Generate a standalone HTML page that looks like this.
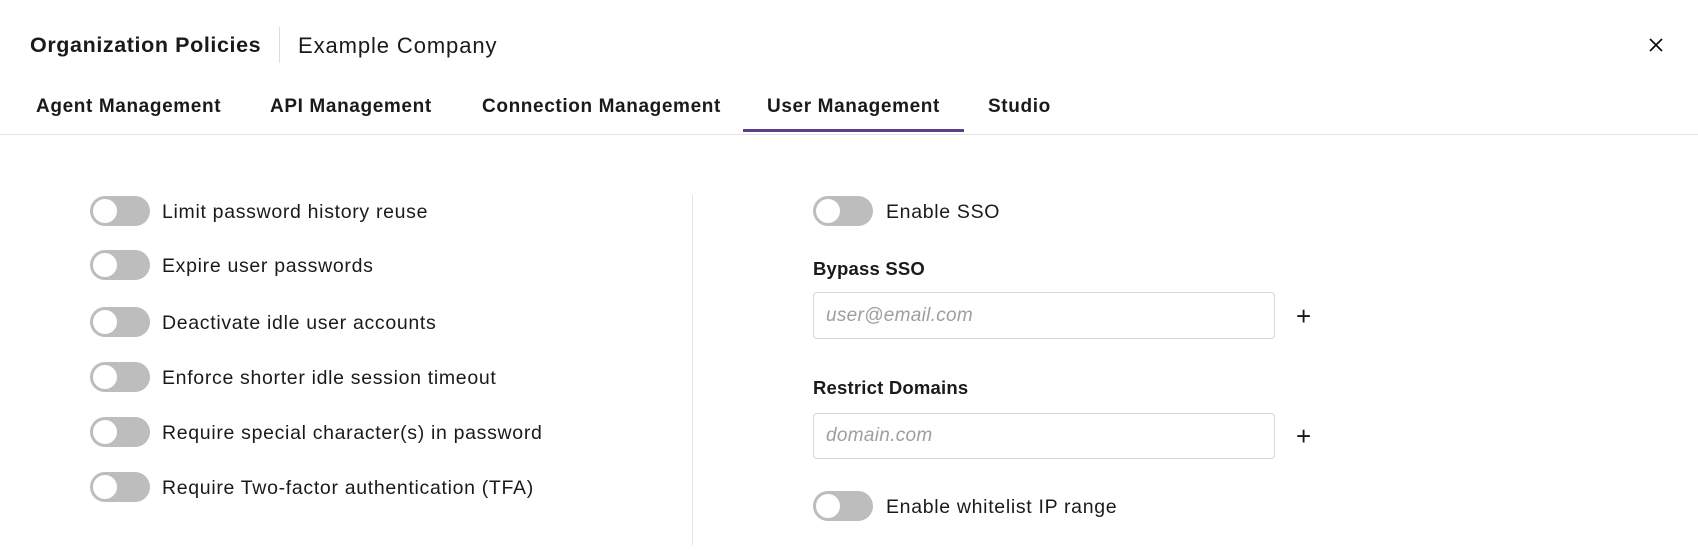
<!DOCTYPE html>
<html><head><meta charset="utf-8"><style>
*{margin:0;padding:0;box-sizing:border-box}
body{width:1698px;height:551px;background:#fff;font-family:"Liberation Sans",sans-serif;color:#1a1a1a;position:relative;overflow:hidden}
.a{position:absolute;white-space:nowrap}
.title{left:30px;top:32px;font-size:21.5px;font-weight:bold;line-height:26px;letter-spacing:0.6px}
.sep{left:279px;top:27px;width:1px;height:36px;background:#ddd}
.comp{left:298px;top:33px;font-size:22px;line-height:26px;letter-spacing:0.9px}
.tab{top:96px;font-size:19px;font-weight:bold;line-height:22px;letter-spacing:0.62px}
.tog{width:60px;height:30px;border-radius:15px;background:#bdbdbd}
.tog::after{content:"";position:absolute;left:3px;top:3px;width:24px;height:24px;border-radius:50%;background:#fff}
.lbl{font-size:19.5px;line-height:22px;letter-spacing:0.68px}
.blbl{font-size:18.5px;font-weight:bold;line-height:22px;letter-spacing:0.2px}
.inp{width:462px;border:1px solid #d6d6d6;border-radius:4px;font-size:19px;font-style:italic;color:#9e9e9e;padding-left:12px;display:flex;align-items:center;letter-spacing:0.3px}
.plus{font-size:26px;line-height:26px;font-weight:300}
</style></head><body>
<div class="a title">Organization Policies</div>
<div class="a sep"></div>
<div class="a comp">Example Company</div>
<svg class="a" style="left:1649px;top:38px" width="14" height="14"><path d="M1 1L13 13M13 1L1 13" stroke="#111" stroke-width="1.8"/></svg>
<div class="a tab" style="left:36px">Agent Management</div>
<div class="a tab" style="left:270px">API Management</div>
<div class="a tab" style="left:482px">Connection Management</div>
<div class="a tab" style="left:767px">User Management</div>
<div class="a tab" style="left:988px">Studio</div>
<div class="a" style="left:0;top:134px;width:1698px;height:1px;background:#e3e3e3"></div>
<div class="a" style="left:743px;top:129px;width:221px;height:3px;background:#5b3f8c"></div>

<div class="a tog" style="left:90px;top:196px"></div><div class="a lbl" style="left:162px;top:201px">Limit password history reuse</div>
<div class="a tog" style="left:90px;top:250px"></div><div class="a lbl" style="left:162px;top:255px">Expire user passwords</div>
<div class="a tog" style="left:90px;top:307px"></div><div class="a lbl" style="left:162px;top:312px">Deactivate idle user accounts</div>
<div class="a tog" style="left:90px;top:362px"></div><div class="a lbl" style="left:162px;top:367px">Enforce shorter idle session timeout</div>
<div class="a tog" style="left:90px;top:417px"></div><div class="a lbl" style="left:162px;top:422px">Require special character(s) in password</div>
<div class="a tog" style="left:90px;top:472px"></div><div class="a lbl" style="left:162px;top:477px">Require Two-factor authentication (TFA)</div>

<div class="a" style="left:692px;top:195px;width:1px;height:350px;background:#e3e3e3"></div>

<div class="a tog" style="left:813px;top:196px"></div><div class="a lbl" style="left:886px;top:201px">Enable SSO</div>
<div class="a blbl" style="left:813px;top:258px">Bypass SSO</div>
<div class="a inp" style="left:813px;top:292px;height:47px">user@email.com</div>
<div class="a plus" style="left:1296px;top:303px">+</div>
<div class="a blbl" style="left:813px;top:377px">Restrict Domains</div>
<div class="a inp" style="left:813px;top:413px;height:46px">domain.com</div>
<div class="a plus" style="left:1296px;top:423px">+</div>
<div class="a tog" style="left:813px;top:491px"></div><div class="a lbl" style="left:886px;top:496px">Enable whitelist IP range</div>
</body></html>
